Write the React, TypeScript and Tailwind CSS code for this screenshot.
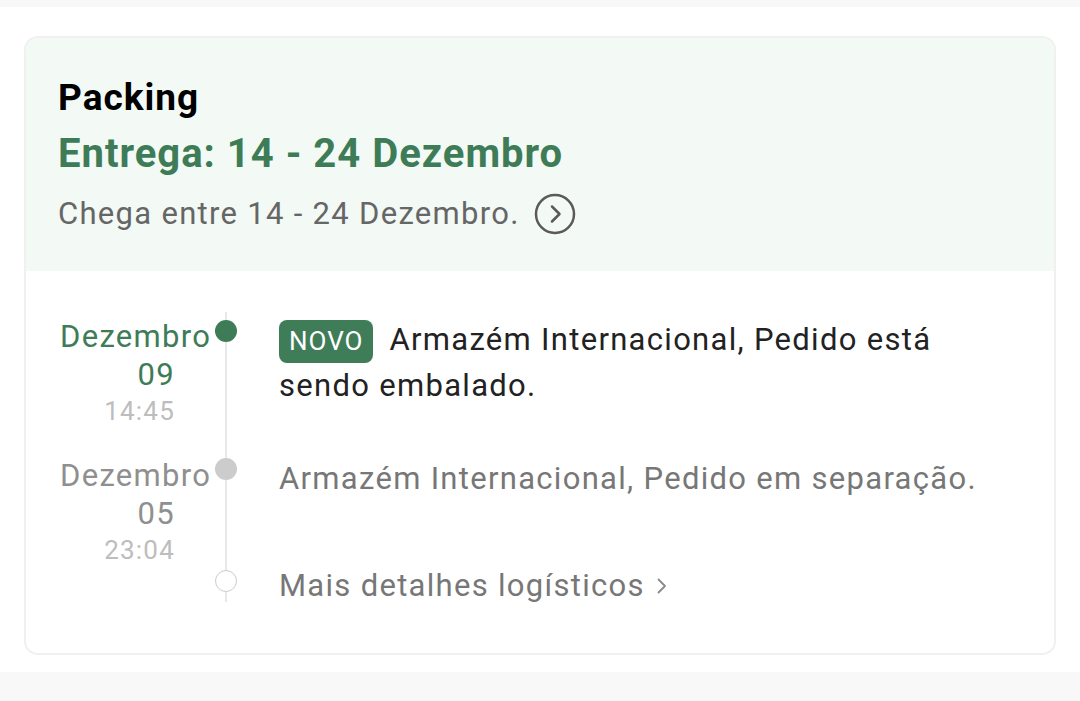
import React from 'react';

function CircleChevron() {
  return (
    <svg width="42" height="42" viewBox="0 0 42 42" fill="none" className="shrink-0">
      <circle cx="21" cy="21" r="19" stroke="#5a5a5a" strokeWidth="2.5" />
      <path d="M18 13.5 L25.5 21 L18 28.5" stroke="#5a5a5a" strokeWidth="2.5" strokeLinecap="round" strokeLinejoin="round" />
    </svg>
  );
}

function SmallChevron() {
  return (
    <svg width="10" height="16" viewBox="0 0 10 16" fill="none" className="inline-block">
      <path d="M1.5 1.5 L8 8 L1.5 14.5" stroke="#8a8a8a" strokeWidth="1.8" strokeLinecap="round" strokeLinejoin="round" />
    </svg>
  );
}

export default function App() {
  return (
    <div className="min-h-[701px] bg-white font-['Roboto','Noto_Sans',sans-serif]">
      <div className="h-[7px] bg-[#f8f8f8]" />
      <div className="px-6 pt-[29px] pb-[17px]">
        <div className="overflow-hidden rounded-[14px] border-2 border-[#f0f0f0]">
          {/* header */}
          <div className="bg-[#f3f9f5] pl-8 pt-[36px] pb-[28px]">
            <div className="text-[37px] font-bold leading-[48px] tracking-[1px] text-black">Packing</div>
            <div className="mt-[3px] text-[40px] font-bold leading-[58px] tracking-[1px] text-[#3e7c57]">
              Entrega: 14 - 24 Dezembro
            </div>
            <div className="mt-[2px] flex items-center gap-[14px]">
              <span className="text-[31px] leading-[58px] tracking-[1.3px] text-[#666]">
                Chega entre 14 - 24 Dezembro.
              </span>
              <CircleChevron />
            </div>
          </div>

          {/* timeline */}
          <div className="relative pt-[46px] pb-[45px] pl-[34px] pr-[54px]">
            <div className="absolute left-[199px] top-[41px] h-[290px] w-[2px] bg-[#e8e8e8]" />

            <div className="grid h-[139px] grid-cols-[115px_22px_1fr] gap-x-[40px]">
              <div className="mt-[1px] text-right text-[31px] leading-[38px] tracking-[1.3px] text-[#3e7c57]">
                <div>Dezembro</div>
                <div>09</div>
                <div className="text-[26px] leading-[35px] tracking-[1.2px] text-[#bdbdbd]">14:45</div>
              </div>
              <div className="relative mt-[3px] h-[22px] w-[22px] rounded-full bg-[#3e7c57]" />
              <div className="ml-[2px] text-[31px] leading-[45px] tracking-[1.3px] text-[#222]">
                <span className="mr-[16px] inline-block rounded-lg bg-[#3f7d58] px-[10px] text-[26px] leading-[43px] tracking-[1px] text-white">
                  NOVO
                </span>
                Armazém Internacional, Pedido está sendo embalado.
              </div>
            </div>

            <div className="grid h-[107px] grid-cols-[115px_22px_1fr] gap-x-[40px]">
              <div className="mt-[1px] text-right text-[31px] leading-[38px] tracking-[1.3px] text-[#8f8f8f]">
                <div>Dezembro</div>
                <div>05</div>
                <div className="text-[26px] leading-[35px] tracking-[1.2px] text-[#bdbdbd]">23:04</div>
              </div>
              <div className="relative mt-[2px] h-[22px] w-[22px] rounded-full bg-[#cccccc]" />
              <div className="ml-[2px] text-[31px] leading-[45px] tracking-[1.3px] text-[#777]">
                Armazém Internacional, Pedido em separação.
              </div>
            </div>

            <div className="grid grid-cols-[115px_22px_1fr] gap-x-[40px]">
              <div />
              <div className="relative mt-[7px] h-[22px] w-[22px] rounded-full border-[1.5px] border-[#cccccc] bg-white" />
              <div className="ml-[2px] flex items-center gap-[12px] text-[31px] leading-[45px] tracking-[1.3px] text-[#777]">
                <span>Mais detalhes logísticos</span>
                <SmallChevron />
              </div>
            </div>
          </div>
        </div>
      </div>
      <div className="h-[29px] bg-[#f8f8f8]" />
    </div>
  );
}
